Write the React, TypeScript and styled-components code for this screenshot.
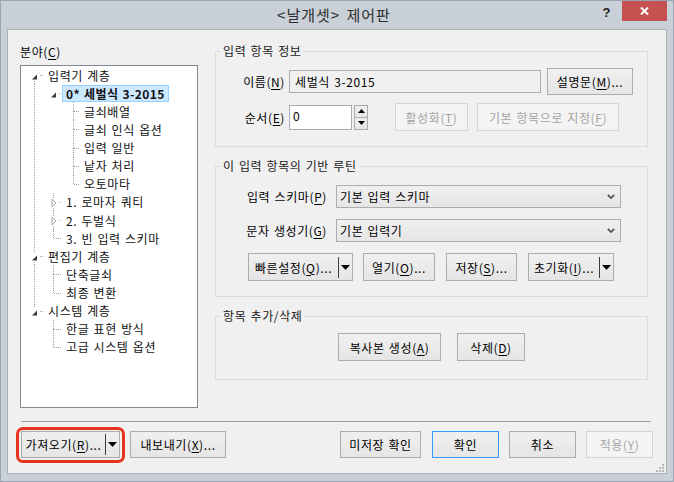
import React from "react";
import styled, { createGlobalStyle } from "styled-components";

const FONT = `"Noto Sans CJK KR", "Noto Sans", sans-serif`;

const GlobalStyle = createGlobalStyle`
  html, body { margin: 0; padding: 0; background: #c9d0d8; }
  body { font-family: ${FONT}; font-size: 12px; color: #000; letter-spacing: 0.6px; word-spacing: 1px; }
  * { box-sizing: border-box; }
`;

const Window = styled.div`
  width: 674px;
  height: 482px;
  background: #c9d0d8;
  border: 1px solid #9ca6b1;
  display: flex;
  flex-direction: column;
  font-family: ${FONT};
`;

const TitleBar = styled.div`
  height: 28px;
  flex-shrink: 0;
  display: grid;
  grid-template-columns: 1fr auto 1fr;
  padding-right: 6px;
`;

const Title = styled.div`
  grid-column: 2;
  font-size: 15px;
  line-height: 28px;
  color: #2d2d2d;
  letter-spacing: 1px;
  word-spacing: 2px;
`;

const Controls = styled.div`
  grid-column: 3;
  justify-self: end;
  display: flex;
  align-items: flex-start;
`;

const HelpMark = styled.span`
  font: bold 13px "Liberation Sans", sans-serif;
  color: #202020;
  margin-top: 4px;
  margin-right: 11px;
`;

const CloseButton = styled.div`
  width: 45px;
  height: 20px;
  background: #c75050;
  display: flex;
  align-items: center;
  justify-content: center;
`;

const Body = styled.div`
  position: relative;
  flex: 1;
  margin: 0 6px 7px 6px;
  background: #f0f0f0;
  border: 1px solid #a9b1ba;
  display: flex;
  flex-direction: column;
`;

const Main = styled.div`
  display: flex;
  padding: 13px 0 0 12px;
`;

const LeftCol = styled.div`
  width: 178px;
  display: flex;
  flex-direction: column;
`;

const PaneLabel = styled.div`
  line-height: 16px;
  margin: 1px 0 5px 0;
`;

const Tree = styled.div`
  height: 343px;
  background: #fff;
  border: 1px solid #828790;
  padding-left: 5px;
`;

const Row = styled.div`
  height: 18.13px;
  display: flex;
  align-items: center;
  white-space: nowrap;
`;

const NodeLabel = styled.span<{ $selected?: boolean }>`
  line-height: 15px;
  padding: 0 3px;
  border: 1px solid ${(p) => (p.$selected ? "#99d1ff" : "transparent")};
  background: ${(p) => (p.$selected ? "#cce8ff" : "transparent")};
  font-weight: ${(p) => (p.$selected ? 700 : 400)};
  letter-spacing: ${(p) => (p.$selected ? "0.4px" : "0.6px")};
  color: #111;
`;

const RightCol = styled.div`
  width: 433px;
  margin-left: 17px;
  display: flex;
  flex-direction: column;
  gap: 11px;
`;

const Group = styled.fieldset<{ $pt: number; $pb: number }>`
  margin: 0;
  min-width: 0;
  border: 1px solid #dcdcdc;
  padding: ${(p) => p.$pt}px 0 ${(p) => p.$pb}px 0;
`;

const Legend = styled.legend`
  margin-left: 5px;
  padding: 0 2px;
  line-height: 16px;
  color: #1a1a1a;
`;

const FormRow = styled.div<{ $h: number; $mt?: number; $pl?: number; $center?: boolean }>`
  display: flex;
  align-items: center;
  height: ${(p) => p.$h}px;
  margin-top: ${(p) => p.$mt ?? 0}px;
  padding-left: ${(p) => p.$pl ?? 0}px;
  justify-content: ${(p) => (p.$center ? "center" : "flex-start")};
`;

const FieldLabel = styled.span<{ $w: number; $gap: number }>`
  width: ${(p) => p.$w}px;
  margin-right: ${(p) => p.$gap}px;
  text-align: right;
  flex-shrink: 0;
`;

const Mn = styled.span`
  text-decoration: underline;
  text-underline-offset: 2px;
`;

const TextBox = styled.div<{ $w: number; $h: number; $top?: boolean; $readonly?: boolean }>`
  width: ${(p) => p.$w}px;
  height: ${(p) => p.$h}px;
  border: 1px solid #abadb3;
  background: ${(p) => (p.$readonly ? "#f0f0f0" : "#fff")};
  display: flex;
  align-items: ${(p) => (p.$top ? "flex-start" : "center")};
  padding: ${(p) => (p.$top ? "2px 0 0 3px" : "0 0 0 5px")};
  line-height: 16px;
  flex-shrink: 0;
`;

const Btn = styled.button<{ $w: number; $h?: number; $default?: boolean; $ml?: number; $ring?: boolean }>`
  position: relative;
  width: ${(p) => p.$w}px;
  height: ${(p) => p.$h ?? 27}px;
  margin: 0 0 0 ${(p) => p.$ml ?? 0}px;
  padding: 0;
  flex-shrink: 0;
  font-family: ${FONT};
  font-size: 12px;
  letter-spacing: 0.6px;
  word-spacing: 1px;
  color: #000;
  background: linear-gradient(#f0f0f0, #e5e5e5);
  border: 1px solid ${(p) => (p.$default ? "#3399ff" : "#acacac")};
  display: flex;
  align-items: center;
  justify-content: center;
  &:disabled {
    color: #a3a3a3;
    background: #f4f4f4;
    border-color: #d5d5d5;
  }
  ${(p) =>
    p.$ring &&
    `&::after {
      content: "";
      position: absolute;
      inset: -5px -6px -6px -6px;
      border: 3px solid #e8321e;
      border-radius: 7px;
    }`}
`;

const SplitText = styled.span`
  flex: 1;
  text-align: center;
`;

const SplitBar = styled.span`
  width: 1px;
  height: 21px;
  background: #3c3c3c;
`;

const Spinner = styled.div`
  width: 14px;
  height: 25px;
  margin-left: 2px;
  display: flex;
  flex-direction: column;
  flex-shrink: 0;
`;

const SpinBtn = styled.div`
  flex: 1;
  border: 1px solid #acacac;
  background: linear-gradient(#f0f0f0, #e5e5e5);
  display: flex;
  align-items: center;
  justify-content: center;
  & + & {
    border-top: none;
  }
`;

const Combo = styled.div`
  width: 285px;
  height: 23px;
  border: 1px solid #acacac;
  background: linear-gradient(#f0f0f0, #e5e5e5);
  display: flex;
  align-items: center;
  justify-content: space-between;
  padding: 0 5px 0 3px;
  flex-shrink: 0;
`;

const Separator = styled.div`
  height: 1px;
  margin: 13px 15px 0 13px;
  background: #a0a0a0;
`;

const ButtonBar = styled.div`
  display: flex;
  justify-content: space-between;
  margin-top: 9px;
  padding: 0 13px;
`;

const ButtonGroup = styled.div<{ $gap: number }>`
  display: flex;
  gap: ${(p) => p.$gap}px;
`;

const Grip = styled.svg`
  position: absolute;
  right: 2px;
  bottom: 1px;
`;

/* ---------- small drawings ---------- */

const Caret = () => (
  <svg width="9" height="5" viewBox="0 0 9 5" style={{ margin: "0 2px 0 2px" }}>
    <polygon points="0,0 9,0 4.5,5" fill="#000" />
  </svg>
);

const Chevron = () => (
  <svg width="8" height="5" viewBox="0 0 8 5">
    <polyline points="0.8,0.8 4,4 7.2,0.8" fill="none" stroke="#505050" strokeWidth="1.7" />
  </svg>
);

const Arrow = ({ up }: { up?: boolean }) => (
  <svg width="7" height="4" viewBox="0 0 7 4">
    <polygon points={up ? "0,4 7,4 3.5,0" : "0,0 7,0 3.5,4"} fill="#000" />
  </svg>
);

const SplitButton = ({ w, h, ml, children, ring }: { w: number; h?: number; ml?: number; children: React.ReactNode; ring?: boolean }) => (
  <Btn $w={w} $h={h} $ml={ml} $ring={ring}>
    <SplitText>{children}</SplitText>
    <SplitBar />
    <Caret />
  </Btn>
);

/* ---------- tree ---------- */

const H = 18.13;
const COL = 18;
const LINE_X = [8.5, 27.5, 47.5];

type Guide = " " | "I" | "T" | "L" | "F";

type TreeNode = {
  label: string;
  guides: Guide[];
  expander?: "open" | "closed";
  selected?: boolean;
};

const treeNodes: TreeNode[] = [
  { label: "입력기 계층", guides: ["F"], expander: "open" },
  { label: "0* 세벌식 3-2015", guides: ["I", " "], expander: "open", selected: true },
  { label: "글쇠배열", guides: ["I", " ", "T"] },
  { label: "글쇠 인식 옵션", guides: ["I", " ", "T"] },
  { label: "입력 일반", guides: ["I", " ", "T"] },
  { label: "낱자 처리", guides: ["I", " ", "T"] },
  { label: "오토마타", guides: ["I", " ", "L"] },
  { label: "1. 로마자 쿼티", guides: ["I", "I"], expander: "closed" },
  { label: "2. 두벌식", guides: ["I", "I"], expander: "closed" },
  { label: "3. 빈 입력 스키마", guides: ["I", "L"] },
  { label: "편집기 계층", guides: ["T"], expander: "open" },
  { label: "단축글쇠", guides: ["I", "T"] },
  { label: "최종 변환", guides: ["I", "L"] },
  { label: "시스템 계층", guides: ["L"], expander: "open" },
  { label: "한글 표현 방식", guides: [" ", "T"] },
  { label: "고급 시스템 옵션", guides: [" ", "L"] },
];

const Gutter = ({ guides, expander }: { guides: Guide[]; expander?: "open" | "closed" }) => {
  const c = 9;
  const last = guides.length - 1;
  const parts: React.ReactNode[] = [];
  const dot = { stroke: "#a0a0a0", strokeWidth: 1, strokeDasharray: "1 1", shapeRendering: "crispEdges" as const };
  guides.forEach((g, i) => {
    const x = LINE_X[i];
    const exp = i === last && expander;
    const topEnd = exp ? c - 4 : g === "I" ? H : c;
    const botStart = exp ? c + 6 : c;
    if (g === "I" || g === "T" || g === "L") parts.push(<line key={`t${i}`} x1={x} y1={0} x2={x} y2={topEnd} {...dot} />);
    if ((g === "I" && exp) || g === "T" || g === "F") parts.push(<line key={`b${i}`} x1={x} y1={botStart} x2={x} y2={H} {...dot} />);
    if (g === "T" || g === "L" || exp) {
      parts.push(<line key={`h${i}`} x1={exp ? x + 5.5 : x} y1={c + 0.5} x2={(i + 1) * COL - 1} y2={c + 0.5} {...dot} />);
    }
    if (exp === "open") {
      parts.push(<polygon key={`e${i}`} points={`${x + 2.5},${c - 0.5} ${x + 2.5},${c + 4.5} ${x - 2.5},${c + 4.5}`} fill="#3a3a3a" />);
    }
    if (exp === "closed") {
      parts.push(<polygon key={`e${i}`} points={`${x - 1.5},${c - 3} ${x + 2.5},${c + 1} ${x - 1.5},${c + 5}`} fill="#fff" stroke="#a6a6a6" strokeWidth="1" />);
    }
  });
  return (
    <svg width={guides.length * COL} height={H} style={{ flexShrink: 0 }}>
      {parts}
    </svg>
  );
};

/* ---------- app ---------- */

export default function App() {
  return (
    <>
      <GlobalStyle />
      <Window>
        <TitleBar>
          <Title>&lt;날개셋&gt; 제어판</Title>
          <Controls>
            <HelpMark>?</HelpMark>
            <CloseButton>
              <svg width="9" height="8" viewBox="0 0 9 8">
                <path d="M1 0.5 L8 7.5 M8 0.5 L1 7.5" stroke="#fff" strokeWidth="2" />
              </svg>
            </CloseButton>
          </Controls>
        </TitleBar>

        <Body>
          <Main>
            <LeftCol>
              <PaneLabel>
                분야(<Mn>C</Mn>)
              </PaneLabel>
              <Tree>
                {treeNodes.map((n) => (
                  <Row key={n.label}>
                    <Gutter guides={n.guides} expander={n.expander} />
                    <NodeLabel $selected={n.selected}>{n.label}</NodeLabel>
                  </Row>
                ))}
              </Tree>
            </LeftCol>

            <RightCol>
              <Group $pt={9} $pb={15}>
                <Legend>입력 항목 정보</Legend>
                <FormRow $h={27}>
                  <FieldLabel $w={69} $gap={4}>
                    이름(<Mn>N</Mn>)
                  </FieldLabel>
                  <TextBox $w={252} $h={23} $readonly>
                    세벌식 3-2015
                  </TextBox>
                  <Btn $w={86} $ml={6}>
                    설명문(<Mn>M</Mn>)...
                  </Btn>
                </FormRow>
                <FormRow $h={28} $mt={8}>
                  <FieldLabel $w={69} $gap={4}>
                    순서(<Mn>E</Mn>)
                  </FieldLabel>
                  <TextBox $w={63} $h={25} $top>
                    0
                  </TextBox>
                  <Spinner>
                    <SpinBtn>
                      <Arrow up />
                    </SpinBtn>
                    <SpinBtn>
                      <Arrow />
                    </SpinBtn>
                  </Spinner>
                  <Btn $w={73} $h={28} $ml={27} disabled>
                    활성화(<Mn>T</Mn>)
                  </Btn>
                  <Btn $w={142} $h={28} $ml={9} disabled>
                    기본 항목으로 지정(<Mn>F</Mn>)
                  </Btn>
                </FormRow>
              </Group>

              <Group $pt={11} $pb={15}>
                <Legend>이 입력 항목의 기반 루틴</Legend>
                <FormRow $h={23}>
                  <FieldLabel $w={111} $gap={9}>
                    입력 스키마(<Mn>P</Mn>)
                  </FieldLabel>
                  <Combo>
                    <span>기본 입력 스키마</span>
                    <Chevron />
                  </Combo>
                </FormRow>
                <FormRow $h={23} $mt={11}>
                  <FieldLabel $w={111} $gap={9}>
                    문자 생성기(<Mn>G</Mn>)
                  </FieldLabel>
                  <Combo>
                    <span>기본 입력기</span>
                    <Chevron />
                  </Combo>
                </FormRow>
                <FormRow $h={28} $mt={11} $pl={32}>
                  <SplitButton w={105} h={28}>
                    빠른설정(<Mn>Q</Mn>)...
                  </SplitButton>
                  <Btn $w={72} $h={28} $ml={10}>
                    열기(<Mn>O</Mn>)...
                  </Btn>
                  <Btn $w={71} $h={28} $ml={11}>
                    저장(<Mn>S</Mn>)...
                  </Btn>
                  <SplitButton w={86} h={28} ml={11}>
                    초기화(<Mn>I</Mn>)...
                  </SplitButton>
                </FormRow>
              </Group>

              <Group $pt={9} $pb={18}>
                <Legend>항목 추가/삭제</Legend>
                <FormRow $h={28} $center>
                  <Btn $w={103} $h={28}>
                    복사본 생성(<Mn>A</Mn>)
                  </Btn>
                  <Btn $w={68} $h={28} $ml={16}>
                    삭제(<Mn>D</Mn>)
                  </Btn>
                </FormRow>
              </Group>
            </RightCol>
          </Main>

          <Separator />

          <ButtonBar>
            <ButtonGroup $gap={10}>
              <SplitButton w={99} ring>
                가져오기(<Mn>R</Mn>)...
              </SplitButton>
              <Btn $w={96}>
                내보내기(<Mn>X</Mn>)...
              </Btn>
            </ButtonGroup>
            <ButtonGroup $gap={10}>
              <Btn $w={81}>미저장 확인</Btn>
              <Btn $w={67} $ml={1} $default>
                확인
              </Btn>
              <Btn $w={67}>취소</Btn>
              <Btn $w={67} disabled>
                적용(<Mn>Y</Mn>)
              </Btn>
            </ButtonGroup>
          </ButtonBar>

          <Grip width="8" height="8" viewBox="0 0 8 8">
            {[
              [6, 0],
              [3, 3],
              [6, 3],
              [0, 6],
              [3, 6],
              [6, 6],
            ].map(([x, y]) => (
              <rect key={`${x}-${y}`} x={x} y={y} width="2" height="2" fill="#b5b5b5" />
            ))}
          </Grip>
        </Body>
      </Window>
    </>
  );
}
